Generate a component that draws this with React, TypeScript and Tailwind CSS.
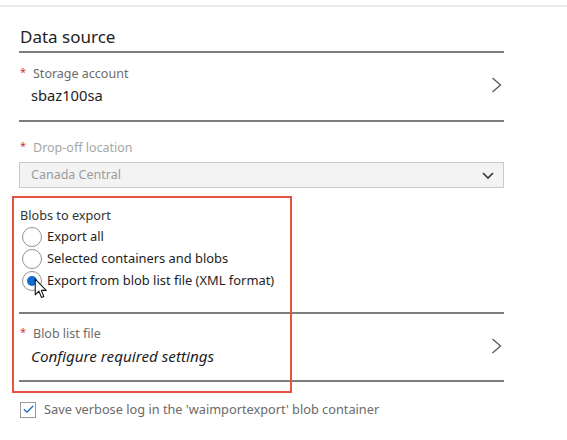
import { Check } from "lucide-react";

const font = { fontFamily: '"Noto Sans", "Open Sans", sans-serif' };

function Label({ text, disabled }: { text: string; disabled?: boolean }) {
  return (
    <div className="flex items-center h-[18px] leading-[18px]">
      <span className="w-[14px] pl-[1px] text-[11px] text-[#d13438] self-start leading-[14px]">*</span>
      <span className={`text-[12.5px] ${disabled ? "text-[#a6a6a6]" : "text-[#6b6b6b]"}`}>
        {text}
      </span>
    </div>
  );
}

function Chevron() {
  return (
    <svg width="11" height="16" viewBox="0 0 11 16" className="mr-[2px]">
      <polyline points="1.5,1 9.5,8 1.5,15" fill="none" stroke="#595959" strokeWidth="1.3" />
    </svg>
  );
}

function Radio({ label, checked }: { label: string; checked?: boolean }) {
  return (
    <div className="flex items-center h-[22px]">
      <span className="ml-[3px] w-[20px] h-[20px] rounded-full border-[1.5px] border-[#939393] flex items-center justify-center bg-white">
        {checked && <span className="w-[10px] h-[10px] rounded-full bg-[#0f6cd0]" />}
      </span>
      <span className="ml-[5px] text-[12.9px] text-[#1e1e1e]">{label}</span>
    </div>
  );
}

export default function App() {
  return (
    <div className="relative w-[567px] h-[440px] bg-white overflow-hidden" style={font}>
      <div className="mt-[5px] h-[2px] bg-[#ececec]" />

      <div className="ml-[19px] w-[485px]">
        {/* Section heading */}
        <div className="mt-[18px] pb-[2px] border-b-2 border-[#7d7d7d]">
          <h2 className="pl-[1px] h-[24px] leading-[24px] text-[17px] text-[#222]">Data source</h2>
        </div>

        {/* Storage account */}
        <div className="flex items-center pt-[12px] pb-[15px] border-b-2 border-[#7d7d7d]">
          <div className="flex-1">
            <Label text="Storage account" />
            <div className="pl-[12px] mt-[2px] h-[20px] leading-[20px] text-[14.7px] text-[#1e1e1e]">sbaz100sa</div>
          </div>
          <Chevron />
        </div>

        {/* Drop-off location */}
        <div className="mt-[17px]">
          <Label text="Drop-off location" disabled />
        </div>
        <div className="mt-[5px] h-[26px] flex items-center justify-between bg-[#f3f3f3] border border-[#c9c9c9] pl-[11px] pr-[9px]">
          <span className="text-[12.5px] text-[#9b9b9b]">Canada Central</span>
          <svg width="12" height="7" viewBox="0 0 12 7">
            <polyline points="1,1 6,6 11,1" fill="none" stroke="#333" strokeWidth="1.6" />
          </svg>
        </div>

        {/* Blobs to export */}
        <div className="mt-[18px] pl-[1px] h-[18px] leading-[18px] text-[12.7px] text-[#333]">Blobs to export</div>
        <div className="mt-[2px]">
          <Radio label="Export all" />
          <Radio label="Selected containers and blobs" />
          <Radio label="Export from blob list file (XML format)" checked />
        </div>
        <div className="mt-[20px] border-b-2 border-[#7d7d7d]" />

        {/* Blob list file */}
        <div className="flex items-center pt-[11px] pb-[14px] border-b-2 border-[#7d7d7d]">
          <div className="flex-1">
            <Label text="Blob list file" />
            <div className="pl-[12px] mt-[3px] h-[20px] leading-[20px] text-[15.2px] italic text-[#1e1e1e]">
              Configure required settings
            </div>
          </div>
          <Chevron />
        </div>

        {/* Verbose log */}
        <div className="mt-[19px] flex items-center h-[17px]">
          <span className="ml-[1px] w-[16px] h-[16px] border border-[#9a9a9a] flex items-center justify-center bg-white">
            <Check size={13} strokeWidth={2.2} className="text-[#1769c9]" />
          </span>
          <span className="ml-[8px] text-[12.75px] text-[#6b6b6b]">
            Save verbose log in the 'waimportexport' blob container
          </span>
        </div>
      </div>

      {/* Red annotation box */}
      <div className="absolute left-[12px] top-[196px] w-[280px] h-[197px] border-2 border-[#e4543f] pointer-events-none" />

      {/* Mouse pointer */}
      <svg className="absolute left-[34px] top-[278px]" width="14" height="21" viewBox="0 0 13 20">
        <path
          d="M1 1 L1 16 L4.5 12.5 L7 18.5 L9.2 17.6 L6.8 11.8 L11.5 11.8 Z"
          fill="#fff"
          stroke="#111"
          strokeWidth="1"
          strokeLinejoin="round"
        />
      </svg>
    </div>
  );
}
